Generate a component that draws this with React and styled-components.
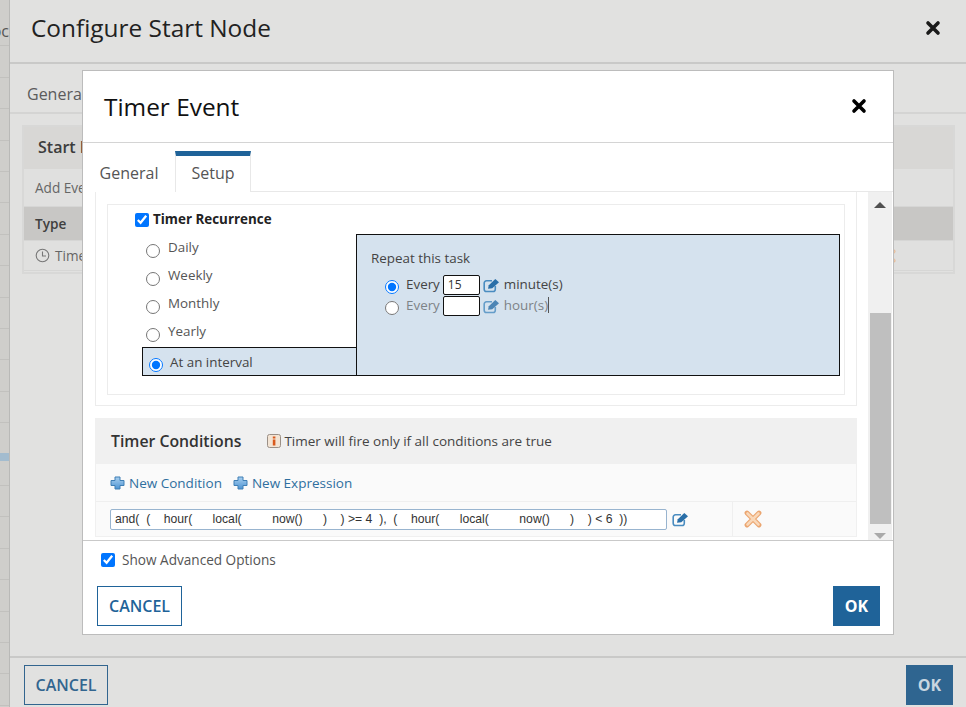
import React from "react";
import styled, { createGlobalStyle } from "styled-components";

const Global = createGlobalStyle`
  html, body { margin: 0; padding: 0; }
  body { width: 966px; height: 707px; overflow: hidden; background: #e1e1e0; font-family: "Open Sans", "Liberation Sans", sans-serif; }
  * { box-sizing: border-box; }
`;

const Page = styled.div`
  position: relative;
  display: flex;
  width: 966px;
  height: 707px;
  overflow: hidden;
`;
const Strip = styled.div`
  width: 10px;
  flex: none;
  position: relative;
  overflow: hidden;
  border-right: 1px solid #b9b9b7;
  background: repeating-linear-gradient(180deg, #cfcecb 0, #cfcecb 30.4px, #c2c1be 30.4px, #c2c1be 31.4px);
  background-position: 0 15px;
`;
const StripText = styled.span`
  position: absolute;
  right: 0;
  top: 20px;
  font-size: 16px;
  color: #555;
  white-space: nowrap;
`;
const StripMark = styled.span`
  position: absolute;
  left: 0;
  top: 453px;
  width: 9px;
  height: 8px;
  background: #a3bccf;
`;
const Back = styled.div`
  flex: 1;
  display: flex;
  flex-direction: column;
  height: 707px;
  background: #e1e1e0;
`;
const BackHeader = styled.div`
  height: 64px;
  flex: none;
  display: flex;
  align-items: center;
  justify-content: space-between;
  padding: 0 25px 7px 21px;
  border-bottom: 2px solid #c9c9c8;
  font-size: 24.4px;
  color: #222;
`;
const BackTabs = styled.div`
  height: 50px;
  flex: none;
  padding: 18px 0 0 17px;
  border-bottom: 2px solid #d4d4d3;
  font-size: 16px;
  line-height: 24px;
  color: #5b5b5b;
`;
const BackPanel = styled.div`
  margin: 11px 11px 0 12px;
  border: 2px solid #d8d8d7;
  height: 149px;
`;
const BackPanelHead = styled.div`
  height: 42px;
  background: #d8d7d5;
  padding: 0 14px;
  font-size: 16px;
  font-weight: 600;
  line-height: 41px;
  color: #3c3c3c;
`;
const BackRow = styled.div`
  height: ${(p) => p.$h}px;
  display: flex;
  align-items: center;
  gap: 5px;
  padding: 0 11px;
  font-size: 13.6px;
  font-weight: ${(p) => (p.$head ? 600 : 400)};
  color: ${(p) => (p.$head ? "#3f3f3f" : "#666")};
  background: ${(p) => (p.$head ? "#c8c7c5" : "#e0e0df")};
  border-bottom: 1px solid #d6d6d5;
`;
const BackSpacer = styled.div`
  flex: 1;
`;
const BackFooter = styled.div`
  height: 51px;
  flex: none;
  display: flex;
  justify-content: space-between;
  align-items: flex-start;
  padding: 7px 13px 0 14px;
  border-top: 2px solid #c9c9c8;
`;
const Peek = styled.span`
  position: absolute;
  left: 882px;
  top: 249px;
  display: flex;
  opacity: 0.6;
`;
const CloseBtn = styled.span`
  display: flex;
  color: ${(p) => p.$color};
`;

const Modal = styled.div`
  position: absolute;
  left: 82px;
  top: 70px;
  width: 812px;
  height: 565px;
  background: #fff;
  border: 1px solid #bcbcbc;
  display: flex;
  flex-direction: column;
`;
const ModalHeader = styled.div`
  height: 72px;
  flex: none;
  display: flex;
  align-items: center;
  justify-content: space-between;
  padding: 0 26px 1px 21px;
  border-bottom: 1px solid #d4d4d4;
  font-size: 24.4px;
  color: #111;
`;
const TabBar = styled.div`
  height: 49px;
  flex: none;
  display: flex;
  align-items: flex-end;
  border-bottom: 1px solid #e8e8e8;
`;
const Tab = styled.div`
  width: ${(p) => p.$w}px;
  height: ${(p) => (p.$active ? "41px" : "40px")};
  margin-bottom: -1px;
  padding-top: ${(p) => (p.$active ? "5px" : "9px")};
  text-align: center;
  font-size: 16px;
  line-height: 24px;
  color: #555;
  background: #fff;
  border-top: ${(p) => (p.$active ? "5px solid #1f6399" : "none")};
  border-left: ${(p) => (p.$active ? "1px solid #e8e8e8" : "none")};
  border-right: ${(p) => (p.$active ? "1px solid #e8e8e8" : "none")};
`;
const Body = styled.div`
  height: 349px;
  flex: none;
  display: flex;
  border-bottom: 1px solid #c9c9c9;
`;
const ScrollArea = styled.div`
  width: 785px;
  flex: none;
  overflow: hidden;
  padding: 0 11px 0 12px;
`;
const Section = styled.div`
  height: 214px;
  padding: 12px 11px;
  border: 1px solid #ececec;
  border-top: none;
`;
const Fieldset = styled.div`
  height: 191px;
  border: 1px solid #ececec;
  padding: 4px 0 0 27px;
`;
const CheckLabel = styled.label`
  display: flex;
  align-items: center;
  gap: ${(p) => (p.$bold ? 4 : 7)}px;
  height: 20px;
  margin-left: ${(p) => (p.$bold ? 0 : 4)}px;
  font-size: ${(p) => (p.$bold ? 13.4 : 13.6)}px;
  font-weight: ${(p) => (p.$bold ? 700 : 400)};
  color: ${(p) => (p.$bold ? "#222" : "#555")};
`;
const Check = styled.input`
  width: 14px;
  height: 14px;
  margin: 2px 0 0;
`;
const Recurrence = styled.div`
  display: flex;
  align-items: flex-end;
  margin-left: 7px;
  margin-top: 5px;
`;
const Options = styled.div`
  width: 215px;
  flex: none;
`;
const Option = styled.label`
  height: 28px;
  display: flex;
  align-items: center;
  gap: 8px;
  padding: 0 0 4px 4px;
  font-size: 13.4px;
  color: #555;
  input { margin-top: 8px; }
`;
const SelectedOption = styled(Option)`
  height: 29px;
  padding: 0 0 0 6px;
  gap: 7px;
  background: #d5e2ee;
  border: 1px solid #111;
  border-right: none;
  color: #444;
  input { margin-top: 6px; }
`;
const Radio = styled.input`
  width: 14px;
  height: 14px;
  margin: 4px 0 0;
`;
const Panel = styled.div`
  width: 484px;
  height: 142px;
  margin-left: -1px;
  position: relative;
  background: #d5e2ee;
  border: 1px solid #111;
  padding: 14px 14px 0;
`;
const PanelTitle = styled.div`
  font-size: 13.4px;
  line-height: 18px;
  color: #444;
  margin-bottom: 8px;
`;
const EveryRow = styled.div`
  display: flex;
  align-items: center;
  height: 20px;
  margin-bottom: 1px;
  padding-left: 14px;
  gap: 3px;
  font-size: 13.4px;
  color: ${(p) => (p.$dim ? "#7d8387" : "#444")};
`;
const EveryLabel = styled.span`
  margin-left: 4px;
  position: relative;
  top: -1px;
`;
const Num = styled.div`
  width: 37px;
  height: 20px;
  background: #fff;
  border: 1px solid #111;
  border-radius: 2px;
  padding-left: 4px;
  font-size: 12px;
  line-height: 18px;
  color: #333;
`;
const Unit = styled.span`
  position: relative;
  top: -1px;
  margin-left: 1px;
`;
const Caret = styled.span`
  display: inline-block;
  width: 1px;
  height: 16px;
  background: #555;
  vertical-align: -3px;
`;
const Conditions = styled.div`
  margin-top: 12px;
  height: 119px;
  border: 1px solid #f0f0f0;
  border-top: none;
  background: #fafafa;
`;
const CondHead = styled.div`
  height: 46px;
  background: #f0f0f0;
  display: flex;
  align-items: center;
  padding-left: 15px;
  font-size: 13.5px;
  color: #444;
`;
const CondTitle = styled.span`
  font-size: 15.8px;
  font-weight: 600;
  color: #333;
  margin-right: 26px;
`;
const CondNote = styled.span`
  display: flex;
  align-items: center;
  gap: 3px;
`;
const CondLinks = styled.div`
  height: 38px;
  display: flex;
  align-items: center;
  gap: 11px;
  padding-left: 14px;
  border-bottom: 1px solid #efefef;
`;
const LinkItem = styled.span`
  display: flex;
  align-items: center;
  gap: 4px;
  font-size: 13.5px;
  color: #2f6f9f;
`;
const CondRow = styled.div`
  height: 34px;
  display: flex;
  align-items: center;
`;
const ExprCell = styled.div`
  width: 637px;
  display: flex;
  align-items: center;
  gap: 5px;
  padding-left: 14px;
  height: 100%;
  border-right: 1px solid #efefef;
`;
const Expr = styled.div`
  width: 557px;
  height: 21px;
  background: #fff;
  border: 1px solid #98b4cf;
  border-radius: 2px;
  padding-left: 4px;
  font-family: "Liberation Sans", sans-serif;
  font-size: 12.2px;
  line-height: 19px;
  color: #333;
  white-space: pre;
`;
const DelCell = styled.div`
  padding-left: 11px;
  display: flex;
  align-items: center;
`;
const Scrollbar = styled.div`
  width: 24px;
  flex: none;
  background: #f0f0f0;
  display: flex;
  flex-direction: column;
  align-items: center;
  padding-top: 10px;
  position: relative;
`;
const Thumb = styled.div`
  width: 21px;
  height: 211px;
  background: #bfbfbf;
  margin-top: 105px;
`;
const ArrowUp = styled.div`
  width: 0;
  height: 0;
  border-left: 6px solid transparent;
  border-right: 6px solid transparent;
  border-bottom: 6px solid #505050;
`;
const ArrowDown = styled.div`
  width: 0;
  height: 0;
  margin-top: 9px;
  border-left: 6px solid transparent;
  border-right: 6px solid transparent;
  border-top: 6px solid #a9a9a9;
`;
const ModalFooter = styled.div`
  flex: 1;
  padding: 8px 13px 0 14px;
`;
const FooterButtons = styled.div`
  display: flex;
  justify-content: space-between;
  margin-top: 17px;
`;
const Outline = styled.button`
  width: ${(p) => p.$w}px;
  height: 40px;
  padding: 0;
  background: transparent;
  border: 1px solid ${(p) => p.$c};
  border-radius: 0;
  font: 600 16px "Open Sans", sans-serif;
  color: ${(p) => p.$c};
`;
const Primary = styled.button`
  width: 47px;
  height: 40px;
  padding: 0;
  background: ${(p) => p.$c};
  border: none;
  font: 700 16px "Open Sans", sans-serif;
  color: ${(p) => p.$t};
`;

const X = ({ size = 16 }) => (
  <svg width={size} height={size} viewBox="0 0 16 16">
    <path d="M3 3 L13 13 M13 3 L3 13" stroke="currentColor" strokeWidth="3.6" strokeLinecap="round" />
  </svg>
);
const Edit = ({ op = 1 }) => (
  <svg width="17" height="15" viewBox="0 0 17 15" opacity={op}>
    <path d="M9 2.8 H3.5 A2.3 2.3 0 0 0 1.2 5.1 V11.2 A2.3 2.3 0 0 0 3.5 13.5 H10 A2.3 2.3 0 0 0 12.3 11.2 V8" fill="none" stroke="#4a8cc0" strokeWidth="1.6" />
    <path d="M5 10.8 L5.8 7.2 L12.3 0.9 L16 4.2 L9.3 10.3 Z" fill="#2a6fa8" />
  </svg>
);
const Plus = () => (
  <svg width="15" height="14" viewBox="0 0 15 14">
    <defs>
      <linearGradient id="plusFill" x1="0" y1="0" x2="0" y2="1">
        <stop offset="0" stopColor="#a9d0f0" />
        <stop offset="1" stopColor="#4e94d2" />
      </linearGradient>
    </defs>
    <path d="M5 1 H10 V4.5 H14 V9.5 H10 V13 H5 V9.5 H1 V4.5 H5 Z" fill="url(#plusFill)" stroke="#3f7fb5" strokeWidth="1" strokeLinejoin="round" />
  </svg>
);
const OrangeX = ({ s = 18 }) => (
  <svg width={s} height={s} viewBox="0 0 18 18">
    <path d="M3 3 L15 15 M15 3 L3 15" stroke="#eba56f" strokeWidth="4.8" strokeLinecap="round" />
    <path d="M3.5 3.5 L14.5 14.5 M14.5 3.5 L3.5 14.5" stroke="#f9d8b9" strokeWidth="2.6" strokeLinecap="round" />
  </svg>
);
const Info = () => (
  <svg width="14" height="14" viewBox="0 0 14 14">
    <rect x=".5" y=".5" width="13" height="13" rx="2" fill="#f3e4d4" stroke="#9a8f86" />
    <rect x="5.8" y="2.5" width="2.6" height="2" fill="#d9591c" />
    <rect x="5.8" y="5.5" width="2.6" height="6" fill="#d9591c" />
  </svg>
);
const Clock = () => (
  <svg width="15" height="15" viewBox="0 0 15 15">
    <circle cx="7.5" cy="7.5" r="6.3" fill="none" stroke="#777" strokeWidth="1.1" />
    <path d="M7.5 3.5 V8 H11" fill="none" stroke="#777" strokeWidth="1.1" />
  </svg>
);

const noop = () => {};

export default function App() {
  return (
    <Page>
      <Global />
      <Strip>
        <StripText>ooc</StripText>
        <StripMark />
      </Strip>
      <Back>
        <BackHeader>
          Configure Start Node
          <CloseBtn $color="#1a1a1a"><X /></CloseBtn>
        </BackHeader>
        <BackTabs>General</BackTabs>
        <BackPanel>
          <BackPanelHead>Start Events</BackPanelHead>
          <BackRow $h={38}>Add Event</BackRow>
          <BackRow $h={34} $head>Type</BackRow>
          <BackRow $h={30}><Clock />Timer</BackRow>
        </BackPanel>
        <BackSpacer />
        <BackFooter>
          <Outline $w={84} $c="#32658f">CANCEL</Outline>
          <Primary $c="#2f6590" $t="#c9d6e0">OK</Primary>
        </BackFooter>
      </Back>
      <Peek><OrangeX s={14} /></Peek>
      <Modal>
        <ModalHeader>
          Timer Event
          <CloseBtn $color="#000"><X /></CloseBtn>
        </ModalHeader>
        <TabBar>
          <Tab $w={92}>General</Tab>
          <Tab $w={76} $active>Setup</Tab>
        </TabBar>
        <Body>
          <ScrollArea>
            <Section>
              <Fieldset>
                <CheckLabel $bold>
                  <Check type="checkbox" checked onChange={noop} />
                  Timer Recurrence
                </CheckLabel>
                <Recurrence>
                  <Options>
                    <Option><Radio type="radio" readOnly checked={false} />Daily</Option>
                    <Option><Radio type="radio" readOnly checked={false} />Weekly</Option>
                    <Option><Radio type="radio" readOnly checked={false} />Monthly</Option>
                    <Option><Radio type="radio" readOnly checked={false} />Yearly</Option>
                    <SelectedOption><Radio type="radio" readOnly checked />At an interval</SelectedOption>
                  </Options>
                  <Panel>
                    <PanelTitle>Repeat this task</PanelTitle>
                    <EveryRow>
                      <Radio type="radio" readOnly checked />
                      <EveryLabel>Every</EveryLabel>
                      <Num>15</Num>
                      <Edit />
                      <Unit>minute(s)</Unit>
                    </EveryRow>
                    <EveryRow $dim>
                      <Radio type="radio" readOnly checked={false} />
                      <EveryLabel>Every</EveryLabel>
                      <Num />
                      <Edit op={0.8} />
                      <Unit>hour(s)<Caret /></Unit>
                    </EveryRow>
                  </Panel>
                </Recurrence>
              </Fieldset>
            </Section>
            <Conditions>
              <CondHead>
                <CondTitle>Timer Conditions</CondTitle>
                <CondNote><Info />Timer will fire only if all conditions are true</CondNote>
              </CondHead>
              <CondLinks>
                <LinkItem><Plus />New Condition</LinkItem>
                <LinkItem><Plus />New Expression</LinkItem>
              </CondLinks>
              <CondRow>
                <ExprCell>
                  <Expr>{"and(  (    hour(      local(         now()      )    ) >= 4  ),  (    hour(      local(         now()      )    ) < 6  ))"}</Expr>
                  <Edit />
                </ExprCell>
                <DelCell><OrangeX /></DelCell>
              </CondRow>
            </Conditions>
          </ScrollArea>
          <Scrollbar>
            <ArrowUp />
            <Thumb />
            <ArrowDown />
          </Scrollbar>
        </Body>
        <ModalFooter>
          <CheckLabel>
            <Check type="checkbox" checked onChange={noop} />
            Show Advanced Options
          </CheckLabel>
          <FooterButtons>
            <Outline $w={85} $c="#1f6399">CANCEL</Outline>
            <Primary $c="#1f6399" $t="#fff">OK</Primary>
          </FooterButtons>
        </ModalFooter>
      </Modal>
    </Page>
  );
}
